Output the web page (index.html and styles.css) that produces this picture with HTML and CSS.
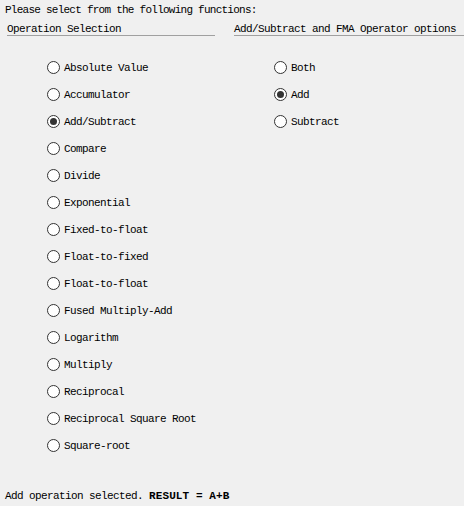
FILE: index.html
```html
<!DOCTYPE html>
<html>
<head>
<meta charset="utf-8">
<link rel="stylesheet" href="styles.css">
</head>
<body>
<div class="page">
  <div class="title">Please select from the following functions:</div>
  <div class="columns">
    <div class="col col-left">
      <div class="header">Operation Selection</div>
      <ul class="radios">
        <li class="radio"><span class="dot"></span><span class="label">Absolute Value</span></li>
        <li class="radio"><span class="dot"></span><span class="label">Accumulator</span></li>
        <li class="radio checked"><span class="dot"></span><span class="label">Add/Subtract</span></li>
        <li class="radio"><span class="dot"></span><span class="label">Compare</span></li>
        <li class="radio"><span class="dot"></span><span class="label">Divide</span></li>
        <li class="radio"><span class="dot"></span><span class="label">Exponential</span></li>
        <li class="radio"><span class="dot"></span><span class="label">Fixed-to-float</span></li>
        <li class="radio"><span class="dot"></span><span class="label">Float-to-fixed</span></li>
        <li class="radio"><span class="dot"></span><span class="label">Float-to-float</span></li>
        <li class="radio"><span class="dot"></span><span class="label">Fused Multiply-Add</span></li>
        <li class="radio"><span class="dot"></span><span class="label">Logarithm</span></li>
        <li class="radio"><span class="dot"></span><span class="label">Multiply</span></li>
        <li class="radio"><span class="dot"></span><span class="label">Reciprocal</span></li>
        <li class="radio"><span class="dot"></span><span class="label">Reciprocal Square Root</span></li>
        <li class="radio"><span class="dot"></span><span class="label">Square-root</span></li>
      </ul>
    </div>
    <div class="col col-right">
      <div class="header">Add/Subtract and FMA Operator options</div>
      <ul class="radios">
        <li class="radio"><span class="dot"></span><span class="label">Both</span></li>
        <li class="radio checked"><span class="dot"></span><span class="label">Add</span></li>
        <li class="radio"><span class="dot"></span><span class="label">Subtract</span></li>
      </ul>
    </div>
  </div>
  <div class="status">Add operation selected. <b class="result">RESULT = A+B</b></div>
</div>
</body>
</html>
```
FILE: styles.css
```css
html, body {
  margin: 0;
  padding: 0;
  background: #f0f0f0;
}
body {
  width: 464px;
  height: 506px;
  overflow: hidden;
  font-family: "Liberation Mono", "DejaVu Sans Mono", monospace;
  font-size: 11px;
  letter-spacing: -0.6px;
  color: #000;
}
.page {
  display: flex;
  flex-direction: column;
}
.title {
  padding-left: 5px;
  padding-top: 3px;
  height: 15px;
  line-height: 15px;
  letter-spacing: -0.75px;
}
.columns {
  display: grid;
  grid-template-columns: 208px 230px;
  column-gap: 19px;
  padding-left: 7px;
  margin-top: 4px;
}
.header {
  line-height: 14px;
  height: 13px;
  border-bottom: 1px solid #a0a0a0;
}
.radios {
  list-style: none;
  margin: 0;
  padding: 0 0 0 40px;
  margin-top: 18px;
}
.radio {
  display: flex;
  align-items: center;
  height: 27px;
  gap: 4px;
}
.dot {
  width: 11px;
  height: 11px;
  border: 1px solid #333;
  border-radius: 50%;
  background: #fff;
  display: flex;
  align-items: center;
  justify-content: center;
  flex: none;
}
.checked .dot::after {
  content: "";
  width: 7px;
  height: 7px;
  border-radius: 50%;
  background: #333;
}
.status {
  padding-left: 5px;
  margin-top: 30px;
  line-height: 14px;
}
.result {
  letter-spacing: 0.1px;
}
```
